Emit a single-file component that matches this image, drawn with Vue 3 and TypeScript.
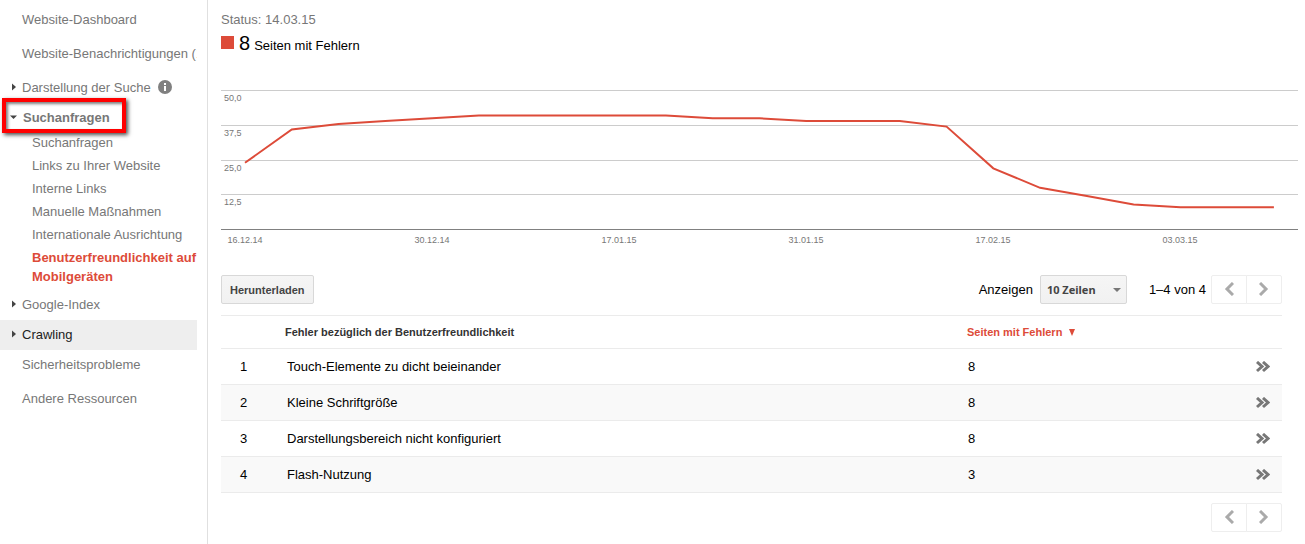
<script setup lang="ts">
import { ref } from 'vue'

interface SubItem {
  label: string
  active?: boolean
}
interface NavItem {
  label: string
  kind: 'leaf' | 'closed' | 'open'
  info?: boolean
  hover?: boolean
  children?: SubItem[]
}

const nav: NavItem[] = [
  { label: 'Website-Dashboard', kind: 'leaf' },
  { label: 'Website-Benachrichtigungen (1)', kind: 'leaf' },
  { label: 'Darstellung der Suche', kind: 'closed', info: true },
  {
    label: 'Suchanfragen',
    kind: 'open',
    children: [
      { label: 'Suchanfragen' },
      { label: 'Links zu Ihrer Website' },
      { label: 'Interne Links' },
      { label: 'Manuelle Maßnahmen' },
      { label: 'Internationale Ausrichtung' },
      { label: 'Benutzerfreundlichkeit auf Mobilgeräten', active: true },
    ],
  },
  { label: 'Google-Index', kind: 'closed' },
  { label: 'Crawling', kind: 'closed', hover: true },
  { label: 'Sicherheitsprobleme', kind: 'leaf' },
  { label: 'Andere Ressourcen', kind: 'leaf' },
]

const values = [24, 36, 38, 39, 40, 41, 41, 41, 41, 41, 40, 40, 39, 39, 39, 37, 22, 15, 12, 9, 8, 8, 8]
const firstX = 24
const stepX = 46.77
const baseY = 149.5
const points = values.map((v, i) => `${(firstX + i * stepX).toFixed(1)},${(baseY - v * 2.78).toFixed(1)}`).join(' ')

const grid = [
  { y: 10, label: '50,0' },
  { y: 45, label: '37,5' },
  { y: 80, label: '25,0' },
  { y: 114, label: '12,5' },
]
const dates = ['16.12.14', '30.12.14', '17.01.15', '31.01.15', '17.02.15', '03.03.15']

const rows = [
  { name: 'Touch-Elemente zu dicht beieinander', count: 8 },
  { name: 'Kleine Schriftgröße', count: 8 },
  { name: 'Darstellungsbereich nicht konfiguriert', count: 8 },
  { name: 'Flash-Nutzung', count: 3 },
]
const pageSize = ref('10')
</script>

<template>
  <div class="page">
    <nav class="sidebar">
      <ul class="nav">
        <li v-for="item in nav" :key="item.label" :class="item.kind">
          <a href="#" class="nav-link" :class="{ hover: item.hover }">
            <svg v-if="item.kind === 'closed'" class="arrow" width="8" height="8" viewBox="0 0 8 8"><path d="M2 0.500v7l4-3.500z" /></svg>
            <svg v-if="item.kind === 'open'" class="arrow" width="8" height="8" viewBox="0 0 8 8"><path d="M0 2.500h7L3.500 6z" /></svg>
            <span>{{ item.label }}</span>
            <svg v-if="item.info" class="info" width="14" height="14" viewBox="0 0 14 14">
              <circle cx="7" cy="7" r="7" fill="#808080" />
              <path d="M6 3h2v2H6zM6 6h2v5H6z" fill="#fff" />
            </svg>
          </a>
          <span v-if="item.kind === 'open'" class="marker"></span>
          <ul v-if="item.children" class="sub">
            <li v-for="child in item.children" :key="child.label">
              <a href="#" :class="{ active: child.active }">{{ child.label }}</a>
            </li>
          </ul>
        </li>
      </ul>
    </nav>

    <main class="main">
      <div class="status">Status: 14.03.15</div>
      <div class="legend">
        <svg class="swatch" width="13" height="14" viewBox="0 0 13 14"><path d="M0 0h13v13H0z" /></svg>
        <span class="count">8</span>
        <span>Seiten mit Fehlern</span>
      </div>

      <svg class="chart" viewBox="0 0 1077 170" role="img" aria-label="Seiten mit Fehlern">
        <g v-for="g in grid" :key="g.y">
          <rect x="0" :y="g.y" width="1077" height="1" fill="#ccc" />
          <text x="3" :y="g.y + 11">{{ g.label }}</text>
        </g>
        <rect x="0" y="149" width="1077" height="1" fill="#808080" />
        <text v-for="(d, i) in dates" :key="d" :x="24 + i * 187" y="163" text-anchor="middle">{{ d }}</text>
        <polyline :points="points" fill="none" stroke="#dd4b39" stroke-width="2" />
      </svg>

      <section class="report">
        <div class="toolbar">
          <button type="button" class="download">Herunterladen</button>
          <div class="paging">
            <label for="rows">Anzeigen</label>
            <span class="select">
              <select id="rows" v-model="pageSize">
                <option value="10">10 Zeilen</option>
                <option value="25">25 Zeilen</option>
              </select>
              <svg class="caret" width="8" height="4" viewBox="0 0 8 4"><path d="M0 0h8L4 4z" /></svg>
            </span>
            <span class="range">1–4 von 4</span>
            <div class="pager">
              <button type="button" aria-label="Zurück"><svg width="10" height="14" viewBox="0 0 10 14"><path d="M9 1L3 7l6 6" /></svg></button>
              <button type="button" aria-label="Weiter"><svg width="10" height="14" viewBox="0 0 10 14"><path d="M1 1l6 6-6 6" /></svg></button>
            </div>
          </div>
        </div>

        <table>
          <thead>
            <tr>
              <th class="num"></th>
              <th class="name">Fehler bezüglich der Benutzerfreundlichkeit</th>
              <th class="pages"><button type="button" class="sort">Seiten mit Fehlern<svg width="7" height="7" viewBox="0 0 7 7"><path d="M0 0h6L3 7z" /></svg></button></th>
              <th class="more"></th>
            </tr>
          </thead>
          <tbody>
            <tr v-for="(row, i) in rows" :key="row.name">
              <td class="num">{{ i + 1 }}</td>
              <td class="name">{{ row.name }}</td>
              <td class="pages">{{ row.count }}</td>
              <td class="more">
                <a href="#" :aria-label="row.name"><svg width="14" height="12" viewBox="0 0 14 12"><path d="M1 1l5 4.500-5 4.500M7 1l5 4.500-5 4.500" /></svg></a>
              </td>
            </tr>
          </tbody>
        </table>

        <div class="footer">
          <div class="pager">
            <button type="button" aria-label="Zurück"><svg width="10" height="14" viewBox="0 0 10 14"><path d="M9 1L3 7l6 6" /></svg></button>
            <button type="button" aria-label="Weiter"><svg width="10" height="14" viewBox="0 0 10 14"><path d="M1 1l6 6-6 6" /></svg></button>
          </div>
        </div>
      </section>
    </main>
  </div>
</template>

<style>
body {
  margin: 0;
  background: #fff;
}
</style>

<style scoped>
.page {
  display: flex;
  min-height: 100vh;
  box-sizing: border-box;
  font-family: "Liberation Sans", Arial, sans-serif;
  font-size: 13px;
  color: #000;
}
button,
select {
  font-family: inherit;
  margin: 0;
}
ul {
  list-style: none;
  margin: 0;
  padding: 0;
}
a {
  text-decoration: none;
}
.sidebar {
  flex: none;
  width: 207px;
  border-right: 1px solid #e0e0e0;
}
.nav {
  width: 197px;
  padding-top: 5px;
}
.nav > li {
  position: relative;
}
.leaf {
  margin-bottom: 4px;
}
.nav-link {
  display: flex;
  align-items: center;
  box-sizing: border-box;
  height: 30px;
  padding: 0 0 2px 22px;
  overflow: hidden;
  white-space: nowrap;
  color: #777;
}
.closed > .nav-link,
.open > .nav-link {
  padding-left: 10px;
  gap: 4px;
}
.arrow {
  flex: none;
  fill: #444;
}
.info {
  margin-left: 3px;
}
.nav-link.hover {
  background: #eee;
  color: #222;
}
.open > .nav-link {
  font-weight: bold;
  gap: 5px;
}
.marker {
  position: absolute;
  top: -5px;
  left: 2px;
  width: 116px;
  height: 27px;
  border: 4px solid #f00;
  box-shadow: 2px 2px 4px rgba(0, 0, 0, 0.7), inset 2px 2px 3px rgba(0, 0, 0, 0.5);
  pointer-events: none;
}
.sub {
  margin: -2px 0 2px;
}
.sub a {
  display: block;
  padding: 2px 0 2px 32px;
  line-height: 19px;
  color: #777;
}
.sub a.active {
  color: #dd4b39;
  font-weight: bold;
}
.main {
  flex: 1;
  min-width: 0;
  padding: 10px 7px 11px 13px;
}
.status {
  line-height: 20px;
  color: #777;
}
.legend {
  display: flex;
  align-items: baseline;
  height: 50px;
  line-height: 26px;
}
.swatch {
  margin-right: 5px;
  fill: #dd4b39;
}
.count {
  margin-right: 4px;
  font-size: 20px;
}
.chart {
  display: block;
  width: 100%;
  height: auto;
}
.chart text {
  font-size: 9px;
  fill: #777;
}
.report {
  margin: 25px 16px 0 0;
}
.toolbar,
.paging,
.pager,
.footer {
  display: flex;
  align-items: center;
}
.toolbar {
  justify-content: space-between;
  margin-bottom: 11px;
}
.download {
  height: 29px;
  padding: 0 8px;
  border: 1px solid #d8d8d8;
  border-radius: 2px;
  background: linear-gradient(#f5f5f5, #f1f1f1);
  color: #444;
  font-size: 11px;
  font-weight: bold;
}
.select {
  position: relative;
  display: flex;
  margin: 0 22px 0 7px;
}
.select select {
  appearance: none;
  width: 87px;
  height: 29px;
  padding: 0 6px;
  border: 1px solid #d8d8d8;
  border-radius: 2px;
  background: linear-gradient(#f5f5f5, #f1f1f1);
  color: #444;
  font-family: "Noto Sans", "Open Sans", sans-serif;
  font-size: 11px;
  font-weight: bold;
}
.caret {
  position: absolute;
  top: 13px;
  right: 6px;
  fill: #777;
  pointer-events: none;
}
.range {
  margin-right: 5px;
}
.pager button {
  display: flex;
  align-items: center;
  justify-content: center;
  width: 36px;
  height: 29px;
  padding: 0 0 2px;
  border: 1px solid #eee;
  background: #fff;
  border-radius: 2px 0 0 2px;
}
.pager button + button {
  margin-left: -1px;
  border-radius: 0 2px 2px 0;
}
.pager path {
  fill: none;
  stroke: #aaa;
  stroke-width: 3;
}
table {
  width: 100%;
  border-collapse: separate;
  border-spacing: 0;
  table-layout: fixed;
  border-top: 1px solid #ebebeb;
}
th,
td {
  box-sizing: border-box;
  height: 36px;
  padding: 0;
  border-bottom: 1px solid #ebebeb;
  text-align: left;
}
th {
  height: 33px;
  font-size: 11px;
  color: #333;
}
tbody tr:nth-child(even) {
  background: #f9f9f9;
}
.num {
  width: 64px;
}
td.num {
  padding-right: 19px;
  text-align: center;
}
.pages {
  width: 275px;
}
td.name {
  padding-left: 2px;
}
.more {
  width: 40px;
}
td.pages {
  padding-left: 1px;
}
.more a {
  display: flex;
  justify-content: flex-end;
  padding-right: 12px;
}
.more path {
  fill: none;
  stroke: #777;
  stroke-width: 3;
}
.sort {
  display: flex;
  align-items: center;
  gap: 7px;
  padding: 0;
  border: 0;
  background: none;
  color: #dd4b39;
  font-size: 11px;
  font-weight: bold;
}
.sort svg {
  fill: #dd4b39;
}
.footer {
  justify-content: flex-end;
  margin-top: 10px;
}
</style>
